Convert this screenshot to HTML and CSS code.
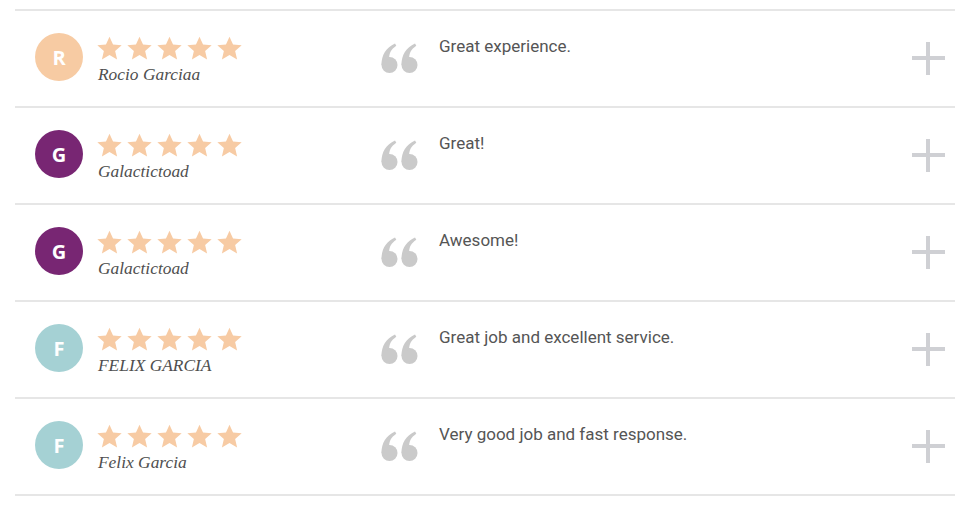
FILE: index.html
```html
<!DOCTYPE html>
<html>
<head>
<meta charset="utf-8">
<link rel="stylesheet" href="styles.css">
</head>
<body>
<svg width="0" height="0" class="defs">
  <defs>
    <symbol id="star" viewBox="0 0 24 24"><path d="M12 0.6l3.4 7.6 8.3 0.7-6.3 5.5 1.9 8.2L12 18.3 4.7 22.6l1.9-8.2L0.3 8.9l8.3-0.7z"/></symbol>
    <symbol id="quote" viewBox="0 0 38 30"><circle cx="8.5" cy="22" r="8"/><path d="M0.5 22C0.5 12 5 4.5 14 0.5l1.3 2.3C10 6.5 8 10.5 8.2 15.5L0.8 22z"/><circle cx="28.5" cy="22" r="8"/><path d="M20.5 22C20.5 12 25 4.5 34 0.5l1.3 2.3C30 6.5 28 10.5 28.2 15.5L20.8 22z"/></symbol>
  </defs>
</svg>
<div class="reviews">
  <div class="review">
    <div class="avatar peach">R</div>
    <div class="who">
      <div class="stars"><svg><use href="#star"/></svg><svg><use href="#star"/></svg><svg><use href="#star"/></svg><svg><use href="#star"/></svg><svg><use href="#star"/></svg></div>
      <div class="name">Rocio Garciaa</div>
    </div>
    <svg class="quote"><use href="#quote"/></svg>
    <div class="text">Great experience.</div>
    <div class="plus"></div>
  </div>
  <div class="review">
    <div class="avatar purple">G</div>
    <div class="who">
      <div class="stars"><svg><use href="#star"/></svg><svg><use href="#star"/></svg><svg><use href="#star"/></svg><svg><use href="#star"/></svg><svg><use href="#star"/></svg></div>
      <div class="name">Galactictoad</div>
    </div>
    <svg class="quote"><use href="#quote"/></svg>
    <div class="text">Great!</div>
    <div class="plus"></div>
  </div>
  <div class="review">
    <div class="avatar purple">G</div>
    <div class="who">
      <div class="stars"><svg><use href="#star"/></svg><svg><use href="#star"/></svg><svg><use href="#star"/></svg><svg><use href="#star"/></svg><svg><use href="#star"/></svg></div>
      <div class="name">Galactictoad</div>
    </div>
    <svg class="quote"><use href="#quote"/></svg>
    <div class="text">Awesome!</div>
    <div class="plus"></div>
  </div>
  <div class="review">
    <div class="avatar teal">F</div>
    <div class="who">
      <div class="stars"><svg><use href="#star"/></svg><svg><use href="#star"/></svg><svg><use href="#star"/></svg><svg><use href="#star"/></svg><svg><use href="#star"/></svg></div>
      <div class="name">FELIX GARCIA</div>
    </div>
    <svg class="quote"><use href="#quote"/></svg>
    <div class="text">Great job and excellent service.</div>
    <div class="plus"></div>
  </div>
  <div class="review">
    <div class="avatar teal">F</div>
    <div class="who">
      <div class="stars"><svg><use href="#star"/></svg><svg><use href="#star"/></svg><svg><use href="#star"/></svg><svg><use href="#star"/></svg><svg><use href="#star"/></svg></div>
      <div class="name">Felix Garcia</div>
    </div>
    <svg class="quote"><use href="#quote"/></svg>
    <div class="text">Very good job and fast response.</div>
    <div class="plus"></div>
  </div>
</div>
</body>
</html>
```

FILE: styles.css
```css
html, body { margin: 0; padding: 0; background: #fff; }
.defs { position: absolute; width: 0; height: 0; }
.reviews {
  margin: 9px 0 0 15px;
  width: 940px;
  border-bottom: 2px solid #e6e6e6;
}
.review {
  display: flex;
  align-items: flex-start;
  height: 95px;
  border-top: 2px solid #e6e6e6;
  padding-left: 20px;
  box-sizing: content-box;
}
.avatar {
  width: 48px;
  height: 48px;
  margin-top: 22px;
  border-radius: 50%;
  color: #fff;
  font-family: "Open Sans", sans-serif;
  font-weight: 700;
  font-size: 20px;
  display: flex;
  align-items: center;
  justify-content: center;
  flex: none;
}
.peach { background: #f7cba3; }
.purple { background: #782673; }
.teal { background: #a5d1d4; }
.who {
  margin-left: 14px;
  margin-top: 25px;
  width: 284px;
  flex: none;
}
.stars { display: flex; gap: 5px; height: 25px; }
.stars svg { width: 25px; height: 25px; fill: #f7cba4; }
.name {
  font-family: "Liberation Serif", serif;
  font-style: italic;
  font-size: 17.4px;
  line-height: 20px;
  color: #4f4f4f;
  margin-top: 3px;
  margin-left: 1px;
}
.quote {
  width: 38px;
  height: 30px;
  margin-top: 32px;
  fill: #cacaca;
  flex: none;
}
.text {
  flex: 1;
  margin-left: 20px;
  margin-top: 25px;
  font-family: Roboto, sans-serif;
  font-size: 17px;
  line-height: 20px;
  color: #555;
}
.plus {
  position: relative;
  width: 33px;
  height: 33px;
  margin-top: 31px;
  margin-right: 10px;
  flex: none;
}
.plus::before, .plus::after {
  content: "";
  position: absolute;
  background: #cfd0d4;
}
.plus::before { left: 0; top: 14px; width: 33px; height: 4px; }
.plus::after { left: 14px; top: 0; width: 4px; height: 33px; }
```
